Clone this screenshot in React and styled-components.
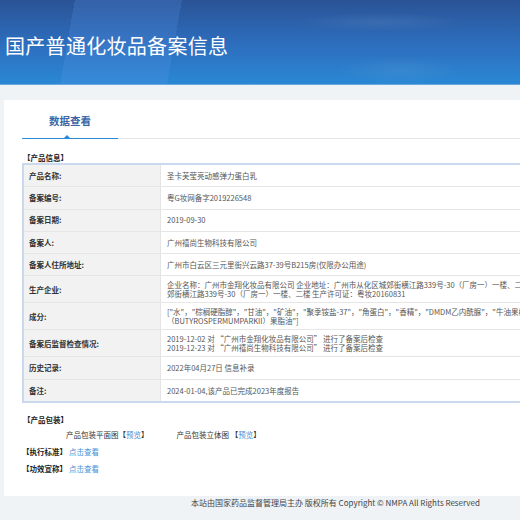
import React from "react";
import styled, { createGlobalStyle } from "styled-components";

const GlobalStyle = createGlobalStyle`
  html, body {
    margin: 0;
    padding: 0;
    background: #eff3f6;
    overflow: hidden;
  }
  body {
    font-family: "Noto Sans CJK SC", "Noto Sans", "Liberation Sans", sans-serif;
    line-height: 1.3;
  }
`;

const rows = [
  { label: "产品名称:", lines: ["圣卡芙莹亮动感弹力蛋白乳"] },
  { label: "备案编号:", lines: ["粤G妆网备字2019226548"] },
  { label: "备案日期:", lines: ["2019-09-30"] },
  { label: "备案人:", lines: ["广州禧尚生物科技有限公司"] },
  { label: "备案人住所地址:", lines: ["广州市白云区三元里街兴云路37-39号B215房(仅限办公用途)"] },
  {
    label: "生产企业:",
    lines: [
      "企业名称：广州市金翔化妆品有限公司 企业地址：广州市从化区城郊街横江路339号-30（厂房一）一楼、二楼 生产许可证：粤妆20160831",
      "郊街横江路339号-30（厂房一）一楼、二楼 生产许可证：粤妆20160831",
    ],
  },
  {
    label: "成分:",
    lines: [
      "[\"水\"，\"棕榈硬脂醇\"，\"甘油\"，\"矿油\"，\"聚季铵盐-37\"，\"角蛋白\"，\"香精\"，\"DMDM乙内酰脲\"，\"牛油果树",
      "（BUTYROSPERMUMPARKII）果脂油\"]",
    ],
  },
  {
    label: "备案后监督检查情况:",
    lines: [
      "2019-12-02 对 “广州市金翔化妆品有限公司” 进行了备案后检查",
      "2019-12-23 对 “广州禧尚生物科技有限公司” 进行了备案后检查",
    ],
  },
  { label: "历史记录:", lines: ["2022年04月27日 信息补录"] },
  { label: "备注:", lines: ["2024-01-04,该产品已完成2023年度报告"] },
];

const App = () => {
  return (
    <Page>
      <GlobalStyle />
      <Header>
        <Title>国产普通化妆品备案信息</Title>
      </Header>
      <Main>
        <Panel>
          <TabBar>
            <Tab>数据查看</Tab>
          </TabBar>
          <SectionTitle>【产品信息】</SectionTitle>
          <Table>
            {rows.map((row, i) => (
              <Row key={row.label} last={i === rows.length - 1}>
                <Label>{row.label}</Label>
                <Value>
                  {row.lines.map((line) => (
                    <div key={line}>{line}</div>
                  ))}
                </Value>
              </Row>
            ))}
          </Table>
          <SectionTitle top="12px">【产品包装】</SectionTitle>
          <PackRow>
            <PackItem>
              产品包装平面图【<Link>预览</Link>】
            </PackItem>
            <PackItem>
              产品包装立体图 【<Link>预览</Link>】
            </PackItem>
          </PackRow>
          <InfoLine>
            <strong>【执行标准】</strong>
            <Link>点击查看</Link>
          </InfoLine>
          <InfoLine>
            <strong>【功效宣称】</strong>
            <Link>点击查看</Link>
          </InfoLine>
        </Panel>
      </Main>
      <Footer>本站由国家药品监督管理局主办 版权所有 Copyright © NMPA All Rights Reserved</Footer>
    </Page>
  );
};

export default App;

const Page = styled.div`
  width: 520px;
  min-height: 520px;
  background: #eff3f6;
`;

const Header = styled.div`
  height: 84px;
  display: flex;
  align-items: center;
  overflow: hidden;
  border-bottom: 1px solid #6aa6de;
  background:
    radial-gradient(ellipse 120px 14px at 380px 22px, rgba(255, 255, 255, 0.07), transparent 70%),
    radial-gradient(ellipse 90px 20px at 400px 70px, rgba(255, 255, 255, 0.06), transparent 70%),
    linear-gradient(100deg, transparent 0 14%, rgba(90, 150, 230, 0.22) 14% 34%, transparent 34%),
    linear-gradient(180deg, #2a5396 0%, #2d6fbf 55%, #2a88d4 100%);
`;

const Title = styled.h1`
  margin: 0 0 0 5px;
  padding-top: 7px;
  font-size: 20px;
  font-weight: 400;
  color: #fff;
  letter-spacing: 0.3px;
`;

const Main = styled.div`
  padding: 15px 0 0 4px;
`;

const Panel = styled.div`
  width: 660px;
  background: #fff;
  padding: 0 0 22px 18px;
  font-size: 7.5px;
  color: #555;
`;

const TabBar = styled.div`
  height: 38px;
  display: flex;
  align-items: flex-end;
  border-bottom: 1px solid #e4e6e9;
`;

const Tab = styled.div`
  position: relative;
  width: 96px;
  height: 37px;
  box-sizing: border-box;
  padding-top: 12px;
  text-align: center;
  font-size: 10.5px;
  font-weight: 700;
  color: #3a66a6;
  border-bottom: 1px solid #2a8ad8;
  margin-bottom: -1px;
  &::after {
    content: "";
    position: absolute;
    left: 42px;
    bottom: 0;
    border-left: 3px solid transparent;
    border-right: 3px solid transparent;
    border-bottom: 3px solid #2a8ad8;
  }
`;

const SectionTitle = styled.div`
  margin-top: ${(p) => p.top || "14px"};
  padding-left: 1px;
  font-size: 7.5px;
  font-weight: 700;
  color: #222;
  line-height: 10px;
`;

const Table = styled.div`
  border: 2px solid #cad9ed;
  display: flex;
  flex-direction: column;
`;

const Row = styled.div`
  display: grid;
  grid-template-columns: 137px 1fr;
  min-height: 21.3px;
  border-bottom: ${(p) => (p.last ? "none" : "1px solid #e6e6e6")};
`;

const Label = styled.div`
  display: flex;
  align-items: center;
  padding-left: 5px;
  background: #f2f2f2;
  border-right: 1px solid #e4e4e4;
  font-weight: 700;
  color: #333;
`;

const Value = styled.div`
  display: flex;
  flex-direction: column;
  justify-content: center;
  padding: 3.5px 6px;
  line-height: 9.5px;
  white-space: nowrap;
  color: #555;
`;

const PackRow = styled.div`
  display: flex;
  gap: 28px;
  padding: 5px 0 0 44px;
  color: #333;
`;

const PackItem = styled.span`
  line-height: 10px;
`;

const Link = styled.span`
  color: #4a8fd8;
`;

const InfoLine = styled.div`
  display: flex;
  gap: 2px;
  margin-top: 7px;
  line-height: 10px;
  strong {
    color: #222;
  }
`;

const Footer = styled.div`
  padding: 2px 0 0 191px;
  font-size: 8px;
  color: #444;
  line-height: 10px;
`;
